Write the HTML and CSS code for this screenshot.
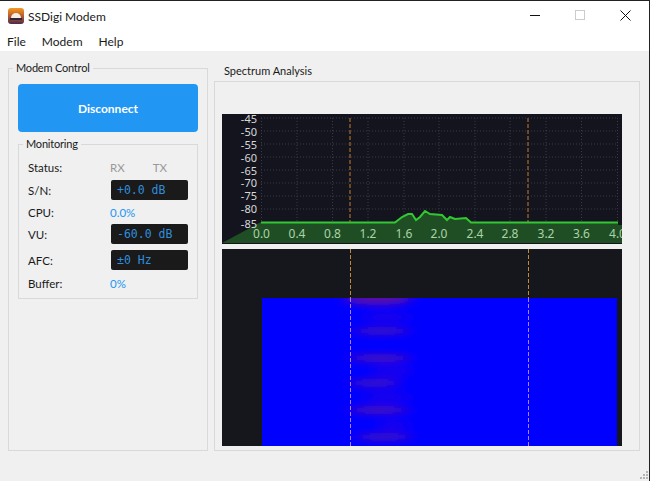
FILE: index.html
```html
<!DOCTYPE html>
<html lang="en">
<head>
    <meta charset="UTF-8">
    <meta name="viewport" content="width=device-width, initial-scale=1.0">
    <title>SSDigi Modem</title>
    <link rel="stylesheet" href="styles.css">
</head>
<body>
    <header class="titlebar">
        <svg class="app-icon" width="16" height="16" viewBox="0 0 16 16">
            <defs>
                <linearGradient id="iconBg" x1="0" y1="0" x2="0" y2="1">
                    <stop offset="0" stop-color="#f59a1c"/>
                    <stop offset="0.5" stop-color="#b85a30"/>
                    <stop offset="1" stop-color="#4a2c48"/>
                </linearGradient>
            </defs>
            <rect width="16" height="16" rx="3" fill="url(#iconBg)"/>
            <path d="M3 10a5 5 0 0 1 10 0z" fill="#f6eee0"/>
            <rect x="2" y="10" width="12" height="2" fill="#33223a"/>
        </svg>
        <span class="app-title">SSDigi Modem</span>
        <div class="window-controls">
            <svg width="10" height="10" viewBox="0 0 10 10"><path d="M0 5.500h10" stroke="#111" fill="none"/></svg>
            <svg width="10" height="10" viewBox="0 0 10 10"><rect x="0.500" y="0.500" width="9" height="9" stroke="#ccc" fill="none"/></svg>
            <svg width="11" height="11" viewBox="0 0 11 11"><path d="M0.500 0.500l10 10M10.500 0.500l-10 10" stroke="#111" fill="none"/></svg>
        </div>
    </header>

    <nav class="menubar">
        <span>File</span>
        <span>Modem</span>
        <span>Help</span>
    </nav>

    <main class="content">
        <fieldset class="group control-panel">
            <legend>Modem Control</legend>
            <button class="connect-btn">Disconnect</button>

            <fieldset class="group monitoring">
                <legend>Monitoring</legend>
                <div class="monitor-grid">
                    <span>Status:</span>
                    <div class="status-leds"><span>RX</span><span>TX</span></div>
                    <span>S/N:</span>
                    <div class="readout">+0.0 dB</div>
                    <span>CPU:</span>
                    <span class="value">0.0%</span>
                    <span>VU:</span>
                    <div class="readout">-60.0 dB</div>
                    <span>AFC:</span>
                    <div class="readout">±0 Hz</div>
                    <span>Buffer:</span>
                    <span class="value">0%</span>
                </div>
            </fieldset>
        </fieldset>

        <section class="spectrum-panel">
            <div class="panel-title">Spectrum Analysis</div>
            <div class="panel-box">
                <svg class="plot" width="400" height="130" viewBox="0 0 400 130">
                    <rect width="400" height="130" fill="#14141e"/>
                    <g class="grid">
                        <path d="M39 4H396M39 17H396M39 30H396M39 43H396M39 56H396M39 69H396M39 82H396M39 95H396"/>
                        <path d="M39.500 4V108M75 4V108M110.500 4V108M146 4V108M182 4V108M217 4V108M253 4V108M288 4V108M324 4V108M359.500 4V108M395.500 4V108"/>
                    </g>
                    <path class="marker" d="M128 4V108M306 4V108"/>
                    <path class="spectrum-fill" d="M0 129L39 108H173L180 103L186 100H190L194 106L198 103L203 97L208 100L220 101L225 106L228 103L233 105L244 104L249 108H396V111H400V129Z"/>
                    <rect y="129" width="400" height="1" fill="#14141e"/>
                    <path class="spectrum-line" d="M39 108.500H173L180 103L186 100H190L194 106L198 103L203 97L208 100L220 101L225 106L228 103L233 105L244 104L249 108.500H396"/>
                    <g class="y-labels">
                        <text x="35" y="9">-45</text>
                        <text x="35" y="22">-50</text>
                        <text x="35" y="35">-55</text>
                        <text x="35" y="48">-60</text>
                        <text x="35" y="61">-65</text>
                        <text x="35" y="73">-70</text>
                        <text x="35" y="86">-75</text>
                        <text x="35" y="99">-80</text>
                        <text x="35" y="114">-85</text>
                    </g>
                    <g class="x-labels">
                        <text x="39.500" y="124">0.0</text>
                        <text x="75" y="124">0.4</text>
                        <text x="110.500" y="124">0.8</text>
                        <text x="146" y="124">1.2</text>
                        <text x="182" y="124">1.6</text>
                        <text x="217" y="124">2.0</text>
                        <text x="253" y="124">2.4</text>
                        <text x="288" y="124">2.8</text>
                        <text x="324" y="124">3.2</text>
                        <text x="359.500" y="124">3.6</text>
                        <text x="395.500" y="124">4.0</text>
                    </g>
                </svg>

                <svg class="plot" width="400" height="197" viewBox="0 0 400 197">
                    <defs>
                        <filter id="soft" x="-50%" y="-50%" width="200%" height="200%">
                            <feGaussianBlur stdDeviation="7 3.500"/>
                        </filter>
                        <filter id="edge"><feGaussianBlur stdDeviation="1"/></filter>
                        <clipPath id="fallClip"><rect x="40" y="49" width="360" height="148"/></clipPath>
                    </defs>
                    <rect width="400" height="197" fill="#16171d"/>
                    <g clip-path="url(#fallClip)">
                        <rect x="40" y="49" width="356" height="148" fill="#0000ff"/>
                        <g filter="url(#soft)">
                            <ellipse cx="165" cy="68" rx="24" ry="6" fill="#1400ee"/>
                            <ellipse cx="170" cy="122" rx="20" ry="7" fill="#1400ee"/>
                            <ellipse cx="165" cy="148" rx="24" ry="6" fill="#1400ee"/>
                            <ellipse cx="172" cy="176" rx="16" ry="6" fill="#1400ee"/>
                            <ellipse cx="156" cy="50" rx="34" ry="6" fill="#5c0ca8"/>
                            <ellipse cx="160" cy="82" rx="28" ry="4" fill="#3e0cc4"/>
                            <ellipse cx="158" cy="109" rx="31" ry="4" fill="#460cbe"/>
                            <ellipse cx="153" cy="134" rx="26" ry="4" fill="#3c0cc6"/>
                            <ellipse cx="157" cy="161" rx="30" ry="4" fill="#480cbc"/>
                            <ellipse cx="162" cy="188" rx="28" ry="4" fill="#3e0cc4"/>
                        </g>
                        <rect x="395" y="49" width="6" height="148" fill="#16171d" filter="url(#edge)"/>
                    </g>
                    <path class="marker-upper" d="M128.500 0V49M306.500 0V49"/>
                    <path class="marker-lower" d="M128.500 49V197M306.500 49V197"/>
                </svg>
            </div>
        </section>
    </main>

    <svg class="size-grip" width="9" height="9" viewBox="0 0 9 9">
        <path d="M7 1h2v2H7zM4 4h2v2H4zM7 4h2v2H7zM1 7h2v2H1zM4 7h2v2H4zM7 7h2v2H7z" fill="#b4b4b4"/>
    </svg>
</body>
</html>
```

FILE: styles.css
```css
html, body {
    height: 100%;
}

body {
    margin: 0;
    position: relative;
    display: flex;
    flex-direction: column;
    box-sizing: border-box;
    border-top: 1px solid #222;
    border-right: 1px solid #222;
    background-color: #f0f0f0;
    font-family: Lato, "Noto Sans", Arial, sans-serif;
    font-size: 11.5px;
    color: #1a1a1a;
    overflow: hidden;
}

.titlebar {
    height: 30px;
    display: flex;
    align-items: center;
    padding-left: 8px;
    background-color: #fff;
}

.app-icon {
    margin-right: 4px;
}

.app-title {
    font-size: 12px;
}

.window-controls {
    margin-left: auto;
    display: flex;
    align-items: center;
    gap: 35px;
    padding: 0 18px 2px 0;
}

.menubar {
    height: 20px;
    display: flex;
    gap: 16px;
    padding-left: 7px;
    background-color: #fff;
    font-size: 12px;
    line-height: 21px;
}

.content {
    flex: 1;
    display: flex;
    gap: 6px;
    padding: 9px 9px 30px 8px;
}

.group {
    margin: 0;
    padding: 0;
    min-width: 0;
    border: 1px solid #d9d9d9;
}

.group legend {
    padding: 0 3px;
    font-size: 11px;
    letter-spacing: -0.2px;
    line-height: 16px;
}

.control-panel {
    width: 200px;
    box-sizing: border-box;
    padding: 8px 9px 0;
}

.control-panel > legend {
    margin-left: -5px;
}

.connect-btn {
    display: block;
    width: 100%;
    height: 48px;
    border: none;
    border-radius: 4px;
    background-color: #2196f3;
    color: #fff;
    font-family: inherit;
    font-size: 12px;
    font-weight: bold;
}

.monitoring {
    margin-top: 4px;
    padding: 4px 9px 0;
    height: 163px;
    box-sizing: border-box;
}

.monitoring legend {
    margin-left: -5px;
}

.monitor-grid {
    display: grid;
    grid-template-columns: 83px 77px;
    grid-template-rows: 23px 22px 23px 20px 32px 14px;
    align-items: center;
}

.status-leds {
    display: flex;
    gap: 28px;
    margin-left: -1px;
    color: #999;
}

.value {
    margin-left: -1px;
    color: #2196f3;
}

.readout {
    height: 20px;
    padding-left: 6px;
    border-radius: 2px;
    background-color: #1a1a1a;
    color: #2f8fdc;
    font-family: "DejaVu Sans Mono", monospace;
    font-size: 11.500px;
    line-height: 20px;
}

.spectrum-panel {
    flex: 1;
    display: flex;
    flex-direction: column;
    padding-top: 3px;
}

.panel-title {
    height: 18px;
    padding-left: 10px;
    font-size: 11px;
    line-height: 16px;
}

.panel-box {
    flex: 1;
    display: flex;
    flex-direction: column;
    gap: 5px;
    padding: 32px 0 0 7px;
    border: 1px solid #d9d9d9;
}

.plot {
    display: block;
}

.grid path {
    stroke: #3a3a44;
    stroke-width: 1;
    stroke-dasharray: 1 2;
    fill: none;
}

.marker {
    stroke: #8a5a28;
    stroke-width: 1.500;
    stroke-dasharray: 4 2;
    fill: none;
}

.spectrum-fill {
    fill: #204e24;
}

.spectrum-line {
    stroke: #32c832;
    stroke-width: 2;
    fill: none;
}

.y-labels text {
    fill: #d8d8d8;
    font-family: "Noto Sans", Arial, sans-serif;
    font-size: 11px;
    text-anchor: end;
}

.x-labels text {
    fill: #a8d4a8;
    font-family: "Noto Sans", Arial, sans-serif;
    font-size: 12px;
    text-anchor: middle;
}

.marker-upper,
.marker-lower {
    stroke-width: 1;
    stroke-dasharray: 4 2;
    fill: none;
}

.marker-upper {
    stroke: #c08a3a;
}

.marker-lower {
    stroke: #b080e0;
}

.size-grip {
    position: absolute;
    right: 1px;
    bottom: 2px;
}
```
